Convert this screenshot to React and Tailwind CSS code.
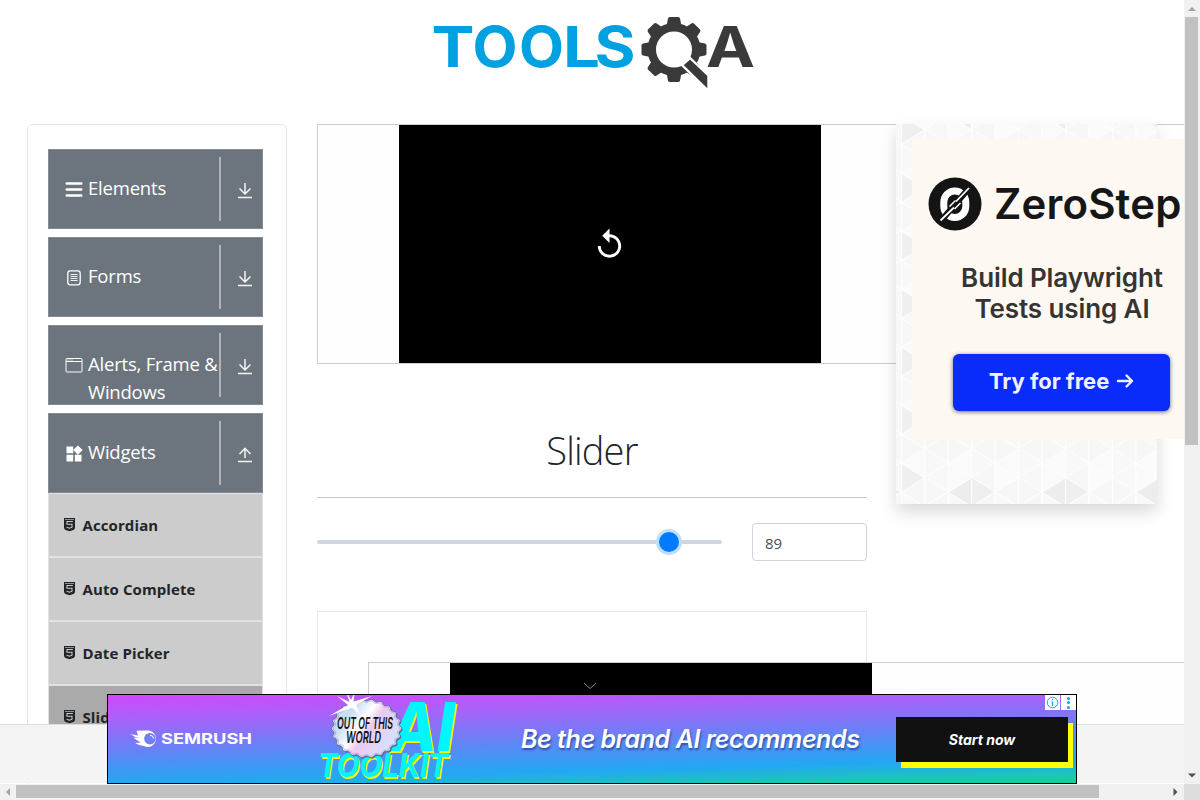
import React from "react";
import { MdReplay, MdWidgets } from "react-icons/md";

const wordmark = [
  { ch: "T", x: 3.5, w: 43 },
  { ch: "O", x: 44.5, w: 45 },
  { ch: "O", x: 91, w: 45 },
  { ch: "L", x: 135, w: 37 },
  { ch: "S", x: 166.5, w: 41 },
];

function GearLogo() {
  return (
    <svg width="330" height="84" viewBox="0 0 330 84" className="block">
      <g fill="#00a1e0" className="font-['Inter',sans-serif] text-[56px] font-bold">
        {wordmark.map((l, i) => (
          <text key={i} x={l.x} y="53" textLength={l.w} lengthAdjust="spacingAndGlyphs">{l.ch}</text>
        ))}
      </g>
      <g fill="#3a3a3b">
        {[0, 45, 90, 135, 180, 225, 270, 315].map((a) => (
          <path key={a} d="M238.500 12 L240 4.500 Q240.300 3 242 3 H250 Q251.700 3 252 4.500 L253.500 12 Z" transform={`rotate(${a} 246 35.500)`} />
        ))}
        <circle cx="246" cy="35.500" r="26.500" />
      </g>
      <circle cx="246" cy="35.500" r="18" fill="#fff" />
      <path d="M254 51 L262 44 L280.500 61.500 V77 Z" fill="#3a3a3b" stroke="#fff" strokeWidth="2.400" />
      <text x="278" y="53" textLength="49" lengthAdjust="spacingAndGlyphs" fill="#3a3a3b" className="font-['Inter',sans-serif] text-[56px] font-bold">A</text>
    </svg>
  );
}

function ArrowIcon({ up }) {
  return (
    <svg width="16" height="17" viewBox="0 0 16 17" fill="none" stroke="#f4f4f4" strokeWidth="1.500">
      {up ? <path d="M8 12V2M2.500 8 8 2.300l5.500 5.700" /> : <path d="M8 1v10.500M2.500 6.500 8 12l5.500-5.500" />}
      <path d="M1 15.500h14" />
    </svg>
  );
}

const icons = {
  bars: (
    <svg width="18" height="18" viewBox="0 0 18 18" stroke="#fff" strokeWidth="2.600" strokeLinecap="round">
      <path d="M1.800 3.500h14.400M1.800 9.500h14.400M1.800 15.500h14.400" />
    </svg>
  ),
  form: (
    <svg width="18" height="18" viewBox="0 0 18 18" fill="none" stroke="#fff">
      <rect x="2.800" y="2.800" width="12.400" height="14" rx="2.500" strokeWidth="1.300" />
      <path d="M5.500 6.500h7M5.500 8.500h7M5.500 10.500h7M5.500 12.500h7" strokeWidth=".9" />
    </svg>
  ),
  frame: (
    <svg width="18" height="18" viewBox="0 0 18 18" fill="none" stroke="#fff">
      <rect x="1" y="2.500" width="16" height="13.500" rx=".8" />
      <path d="M1 5.500h16" />
      <path d="M2.500 4h5" strokeDasharray="1 1" />
    </svg>
  ),
  widgets: <MdWidgets size={20} color="#fff" className="-ml-px" />,
};

const groups = [
  { icon: "bars", lines: ["Elements"] },
  { icon: "form", lines: ["Forms"] },
  { icon: "frame", lines: ["Alerts, Frame &", "Windows"] },
  { icon: "widgets", lines: ["Widgets"], open: true },
];

function Group({ icon, lines, open }) {
  return (
    <div className="flex h-[80px] border border-[#858c93] bg-[#6c757d] pl-4 text-white">
      <div className="mt-[30px] h-[18px] w-[23px] shrink-0">{icons[icon]}</div>
      <div className="mt-[24px] w-[131px] shrink-0 text-[18.500px] leading-[28px] tracking-[-0.200px]">
        {lines.map((l) => (
          <div key={l} className="whitespace-nowrap">{l}</div>
        ))}
      </div>
      <div className="mt-[7px] h-[64px] w-[2px] shrink-0 bg-[#b3b3b3]" />
      <div className="mt-[32px] ml-[16px]">
        <ArrowIcon up={open} />
      </div>
    </div>
  );
}

function Html5() {
  return (
    <svg width="11" height="14" viewBox="0 0 11 14">
      <path d="M0 0h11v9.800Q11 11 9.500 11.900L5.500 13.300 1.500 11.900Q0 11 0 9.800Z" fill="#212529" />
      <path d="M1 1.500h9" stroke="#b0b0b0" strokeWidth=".8" />
      <path d="M8.800 3.500H3V6.200h5v3L5.500 10.200 2.600 9.200" fill="none" stroke="#ccc" strokeWidth="1.100" />
    </svg>
  );
}

const items = ["Accordian", "Auto Complete", "Date Picker", "Slider"];

function Sidebar() {
  return (
    <aside className="h-[900px] w-[260px] shrink-0 rounded-[5px] border border-[#e5e5e5] px-5 pt-[24px]">
      <div className="flex w-[215px] flex-col gap-2">
        {groups.map((g) => (
          <Group key={g.icon} {...g} />
        ))}
      </div>
      <ul className="w-[215px]">
        {items.map((t) => (
          <li key={t} className={`flex h-[64px] items-center border border-[#dee2e6] pl-[15px] ${t === "Slider" ? "bg-[#aaaaaa]" : "bg-[#cccccc]"}`}>
            <Html5 />
            <span className="ml-[7.500px] pt-[1px] text-[15px] font-bold tracking-[0.100px] text-[#212529]">{t}</span>
          </li>
        ))}
      </ul>
    </aside>
  );
}

function Video({ children }) {
  return (
    <div className="flex h-[240px] w-[900px] border border-[#ccc] bg-[#fefefe] pl-[81px]">
      <div className="flex w-[422px] justify-center bg-black">{children}</div>
    </div>
  );
}

function Content() {
  return (
    <main className="ml-[30px] w-[550px] shrink-0">
      <Video>
        <MdReplay size={35} color="#fff" className="mt-[102px] mr-px" />
      </Video>
      <h1 className="mt-[56px] text-center text-[38px] leading-[60px] font-light tracking-[-0.800px] text-[#212529]">Slider</h1>
      <hr className="mt-[17px] border-[#c6c6c6]" />
      <div className="mt-[25px] flex h-[38px] items-center">
        <div className="flex h-1 w-[405px] items-center rounded-full bg-[#d0d6dc] pl-[339px]">
          <div className="h-[26px] w-[26px] rounded-full border-3 border-[#bfdeff] bg-[#007bff]" />
        </div>
        <div className="ml-[30px] flex h-[38px] w-[115px] items-center rounded-[4px] border border-[#ced4da] pt-[3px] pl-3 text-[15px] text-[#495057]">89</div>
      </div>
      <div className="mt-[50px] h-[300px] border border-[#e9e9e9] pt-[50px] pl-[50px]">
        <Video>
          <svg width="14" height="8" viewBox="0 0 14 8" className="mt-[19px] mr-[142px]" fill="none" stroke="#8a8a8a">
            <path d="M1 1l6 5.500L13 1" />
          </svg>
        </Video>
      </div>
    </main>
  );
}

const COL = 23.45;
const SIDE = 29;
const triangles = [];
for (let c = -1; c < 11; c++) {
  const x = 5.4 + c * COL;
  const base = Math.abs(c) % 2 ? 5.3 : -8.7;
  for (let r = -1; r < 14; r++) {
    const y = base + r * SIDE;
    const m = ((c % 4) + 4) % 4;
    const darkRight = (r % 2 === 0 && c === 0) || (m === 3 && r === 12);
    const darkLeft = m === 2 && (r === 13 || r === 0);
    const tone = ["#fbfbfb", "#f8f8f8", "#fafafa", "#f7f7f7"];
    const pick = (a) => tone[(((c * 3 + r * 5 + a + c * r) % 4) + 4) % 4];
    triangles.push({
      p: `${x},${y} ${x},${y + SIDE} ${x + COL},${y + SIDE / 2}`,
      f: darkRight ? "#efefef" : pick(0),
    });
    triangles.push({
      p: `${x},${y} ${x + COL},${y - SIDE / 2} ${x + COL},${y + SIDE / 2}`,
      f: darkLeft ? "#ededed" : pick(2),
    });
  }
}

function SideAd() {
  return (
    <section className="relative ml-[29px] h-[380px] w-[261px] shrink-0 bg-[#fbfbfb] shadow-[0_8px_16px_rgba(0,0,0,0.15)]">
      <svg width="261" height="380" className="absolute inset-0">
        {triangles.map((t, i) => (
          <polygon key={i} points={t.p} fill={t.f} stroke="#fefefe" strokeWidth="1" />
        ))}
      </svg>
      <div className="relative mt-[15px] ml-[16px] h-[300px] w-[300px] bg-[#fef8f2] font-['Inter',sans-serif]">
        <div className="flex items-center pt-[38px] pl-[16px]">
          <svg width="54" height="54" viewBox="0 0 54 54">
            <circle cx="27" cy="27" r="26.500" fill="#141414" />
            <rect x="15.800" y="14" width="22" height="26.500" rx="11" fill="none" stroke="#fff" strokeWidth="7" />
            <path d="M12 45 42 10" stroke="#141414" strokeWidth="6" />
            <path d="M12.500 43.500 26 30.500M28 24.500 41 11" stroke="#fff" strokeWidth="1.800" />
            <path d="M21.500 29.500l6-6M26.500 32l6-6" stroke="#fff" strokeWidth="1.500" />
          </svg>
          <span className="ml-[12px] text-[42px] leading-[54px] font-semibold tracking-[0.150px] whitespace-nowrap text-[#161616]">ZeroStep</span>
        </div>
        <div className="mt-[31px] text-center text-[26px] leading-[31px] font-semibold tracking-[-0.100px] text-[#363432]">
          Build Playwright
          <br />
          Tests using AI
        </div>
        <div className="mt-[30px] ml-[41px] flex h-[57px] w-[217px] items-center justify-center rounded-[6px] bg-[#0a2cfb] pb-[3px] text-[22px] font-bold text-[#eef1ff] shadow-[0_1px_4px_rgba(0,0,60,0.6)]">
          Try for free
          <svg width="18" height="16" viewBox="0 0 18 16" className="ml-[7px]" fill="none" stroke="#eef1ff" strokeWidth="2.400" strokeLinecap="round" strokeLinejoin="round">
            <path d="M2 8h14M10.500 2.500 16 8l-5.500 5.500" />
          </svg>
        </div>
      </div>
    </section>
  );
}

let badge = "";
for (let i = 0; i <= 240; i++) {
  const a = (i / 240) * Math.PI * 2;
  const r = 1 + 0.035 * Math.cos(a * 22);
  badge += `${i ? "L" : "M"}${(46.5 + Math.cos(a) * 34 * r).toFixed(1)} ${(33.5 + Math.sin(a) * 28.5 * r).toFixed(1)}`;
}

function BannerArt() {
  return (
    <svg width="146" height="88" viewBox="0 0 146 88" className="shrink-0">
      <defs>
        <linearGradient id="foil" x1="0" y1="0" x2="1" y2=".6">
          <stop offset="0" stopColor="#d9e4fa" />
          <stop offset=".3" stopColor="#c7dcf5" />
          <stop offset=".5" stopColor="#fff" />
          <stop offset=".62" stopColor="#ecc9f2" />
          <stop offset="1" stopColor="#d5e2fb" />
        </linearGradient>
      </defs>
      <g fill="#00f6fd" className="font-['Inter',sans-serif] italic">
        <text x="69" y="56" fontSize="68" textLength="66" lengthAdjust="spacingAndGlyphs" className="font-extrabold [text-shadow:1.500px_1.500px_0_#f3f700]">AI</text>
        <text x="-2" y="82" fontSize="33" textLength="130" lengthAdjust="spacingAndGlyphs" className="font-bold [text-shadow:1.500px_1.500px_0_#f3f700]">TOOLKIT</text>
      </g>
      <path d={badge} fill="#5b67a8" transform="translate(1 1)" />
      <path d={badge} fill="url(#foil)" stroke="#596185" strokeWidth=".8" />
      <path d={badge} fill="none" stroke="#8b93b8" strokeWidth=".6" transform="translate(2.400 1.700) scale(.95)" />
      <path d="M25 -6 31 5 35 -4 33.500 6.500 52 1 36 10 41 21 32 12.500 9 21 28 10 17 1 29.500 7Z" fill="#fff" />
      <g className="font-['Inter',sans-serif] font-semibold italic" fill="#111" fontSize="16">
        <text x="17" y="33.500" textLength="56" lengthAdjust="spacingAndGlyphs">OUT OF THIS</text>
        <text x="26" y="48" textLength="35" lengthAdjust="spacingAndGlyphs">WORLD</text>
      </g>
    </svg>
  );
}

function Banner() {
  return (
    <div className="absolute top-[694px] left-[107px] flex h-[90px] w-[970px] items-center overflow-hidden border border-black bg-[linear-gradient(178.5deg,#d048fb_0%,#a862f9_22%,#6a80f6_48%,#22a8f3_78%,#1cc5b8_92%,#18cf96_100%)] font-['Inter',sans-serif] text-white">
      <svg width="126" height="20" viewBox="0 0 126 20" className="ml-[22px] shrink-0">
        <path d="M.5 5 8 6.500 6.500 1.800Q12 1.200 19 1.600A8.200 8.200 0 1 1 14.500 17.200Q9 16.500 5 14L11 13.500Q5 10.500 3.500 8.500L9.500 9Q4 8 .5 5Z" fill="#fff" />
        <circle cx="20" cy="9.700" r="5.800" fill="#737ff6" />
        <path d="M20 6.200A3.500 3.500 0 0 1 23.500 9.700" fill="none" stroke="#fff" strokeWidth="1" />
        <text x="31" y="15" fontSize="14.500" textLength="91" lengthAdjust="spacingAndGlyphs" fill="#fff" className="font-bold">SEMRUSH</text>
      </svg>
      <div className="ml-[64px]">
        <BannerArt />
      </div>
      <div className="mt-[2px] ml-[55px] w-[345px] shrink-0 text-[25px] font-semibold tracking-[-0.440px] whitespace-nowrap italic [text-shadow:1px_2px_2px_rgba(20,40,120,0.6)]">Be the brand AI recommends</div>
      <div className="ml-[30px] flex h-[45px] w-[172px] shrink-0 items-center justify-center bg-[#111] text-[14px] font-bold italic shadow-[5px_6px_0_#ffff00]">Start now</div>
      <div className="absolute top-0 right-0 flex gap-px">
        <div className="flex h-[15px] w-[15px] items-center justify-center bg-white">
          <svg width="13" height="13" viewBox="0 0 13 13" fill="none" stroke="#00aecd">
            <circle cx="6.500" cy="6.500" r="5.300" />
            <path d="M6.500 5.500v4.500M6.500 3v1.300" strokeWidth="1.400" />
          </svg>
        </div>
        <div className="flex h-[15px] w-[15px] flex-col items-center justify-center gap-[1.500px] bg-white">
          <i className="h-[3px] w-[3px] rounded-full bg-[#00aecd]" />
          <i className="h-[3px] w-[3px] rounded-full bg-[#00aecd]" />
          <i className="h-[3px] w-[3px] rounded-full bg-[#00aecd]" />
        </div>
      </div>
    </div>
  );
}

export default function App() {
  return (
    <div className="grid h-[800px] w-[1200px] grid-cols-[1184px_16px] grid-rows-[784px_16px] overflow-hidden bg-white font-['Open_Sans','Noto_Sans',sans-serif]">
      <div className="relative overflow-hidden">
        <header className="h-[124px] pt-[14px] pl-[428px]">
          <GearLogo />
        </header>
        <div className="flex w-[1300px] items-start pl-[27px]">
          <Sidebar />
          <Content />
          <SideAd />
        </div>
        <footer className="absolute top-[724px] left-0 h-[59px] w-full border-t border-[#dcdcdc] bg-[#f4f4f4]" />
        <Banner />
      </div>
      <div className="flex flex-col items-center justify-between bg-[#f1f1f1] pb-[6px]">
        <div className="flex flex-col items-center">
          <svg width="8" height="17" viewBox="0 0 8 17"><path d="M0 11 4 7l4 4z" fill="#a3a3a3" /></svg>
          <div className="mr-[1px] h-[428px] w-[13px] bg-[#c1c1c1]" />
        </div>
        <svg width="8" height="5" viewBox="0 0 8 5"><path d="M0 .5h8L4 4.500z" fill="#505050" /></svg>
      </div>
      <div className="flex items-center justify-between bg-[#f1f1f1] pr-[6px]">
        <div className="mb-px flex items-center">
          <svg width="16" height="8" viewBox="0 0 16 8"><path d="M10 0v8L6 4z" fill="#a3a3a3" /></svg>
          <div className="h-[13px] w-[1083px] bg-[#c1c1c1]" />
        </div>
        <svg width="5" height="8" viewBox="0 0 5 8"><path d="M.5 0v8L4.500 4z" fill="#505050" /></svg>
      </div>
      <div className="bg-[#dcdcdc]" />
    </div>
  );
}
